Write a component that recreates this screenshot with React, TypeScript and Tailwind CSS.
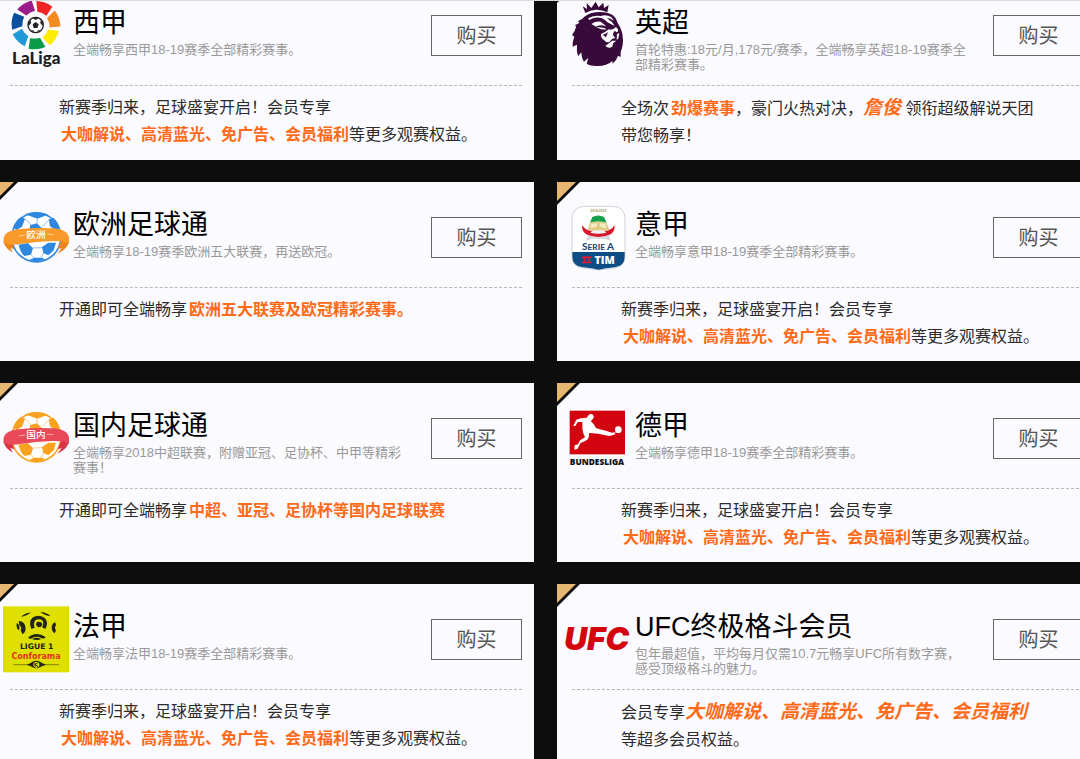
import type { ReactNode } from 'react';

const orange = 'ml-0.5 font-bold text-[#ff6a17]';
const orangeItalic = 'text-[19px] font-bold italic text-[#ff6a17]';

function LaLigaLogo() {
  const colors = ['#ee2523', '#f58a1f', '#ffed00', '#0a9b48', '#1f9ad6', '#0b4f9e', '#9b1b8a'];
  return (
    <svg viewBox="9 6 198 210" className="h-full w-full" role="img" aria-label="LaLiga">
      {colors.map((color, i) => (
        <path key={color} d="M109 6 Q136 7 157 23 L139 50 Q127 40 112 38 Z" fill={color} transform={`rotate(${(i * 360) / 7} 107 78)`} />
      ))}
      <circle cx="107" cy="78" r="23" fill="#fff" stroke="#222" strokeWidth="4" />
      <path d="M107 69 L116 76 L112 87 H101 L98 76 Z" fill="#222" />
      <path d="M98 58 Q107 54 116 58 L107 63 Z M86 71 L92 63 L93 73 L86 81 Z M128 71 L122 63 L121 73 L128 81 Z M92 94 L100 94 L103 100 Z M122 94 L114 94 L111 100 Z" fill="#222" />
      <text x="109" y="196" textAnchor="middle" fontSize="51" className="fill-[#1d1d1d] font-['Lato',sans-serif] font-black">LaLiga</text>
    </svg>
  );
}

function PremierLeagueLogo() {
  return (
    <svg viewBox="27 6 198 210" className="h-full w-full" role="img" aria-label="Premier League">
      <g fill="#380a3c">
        <path d="M88 42 L80 22 L93 30 L92 12 L106 27 L119 8 L128 25 L142 11 L144 27 L158 18 L154 40 Q136 31 120 32 Q102 33 88 42 Z" />
        <path d="M78 60 Q93 43 119 40 Q149 36 170 48 Q181 56 184 70 L193 86 Q201 101 201 122 Q201 144 194 158 L194 174 L186 170 Q181 186 170 194 L169 186 Q151 203 119 201 Q104 201 92 195 L97 176 L84 188 Q77 179 76 160 L66 172 Q61 155 63 137 L50 143 Q49 127 55 113 L48 108 Q57 98 60 84 L58 78 L70 72 L66 66 Z" />
      </g>
      <g fill="#fbfafe">
        <path d="M96 58 Q113 47 135 51 Q150 46 166 54 L174 65 Q163 57 152 57 L168 69 L176 81 L164 75 Q152 70 146 62 Q131 52 113 57 L100 63 Z" />
        <path d="M106 75 Q119 66 134 68 L151 82 L138 79 Q128 79 119 83 L146 87 L151 91 Q137 93 128 88 Q116 80 106 75 Z" />
        <path d="M158 91 Q168 95 180 84 L186 91 Q188 99 181 100 L177 95 Q170 101 171 109 L178 117 L169 119 L160 129 Q150 132 144 123 Q134 119 135 105 L147 99 Z" />
        <path d="M153 137 L169 125 L181 125 L172 132 L169 143 Q157 151 148 140 Z" />
        <path d="M183 105 L190 102 L187 119 L182 122 Z" />
      </g>
      <path d="M140 107 Q149 106 156 99 L150 115 Z" fill="#380a3c" />
    </svg>
  );
}

function BallLogo({ label, viewBox, ball, seam, ribbon, fold }: { label: string; viewBox: string; ball: string; seam: string; ribbon: string; fold: string }) {
  return (
    <svg viewBox={viewBox} className="h-full w-full" role="img" aria-label={label}>
      <circle cx="109" cy="172" r="76" fill={ball} />
      <circle cx="109" cy="172" r="71" fill="#fff" />
      <g fill={ball}>
        <path d="M74 103 Q108 90 144 103 L132 109 L112 116 L88 107 Z" />
        <path d="M39 143 Q47 120 64 110 L75 116 L66 140 L50 150 Z" />
        <path d="M146 118 L160 113 Q175 126 179 145 L166 151 L150 139 Z" />
        <path d="M91 135 L111 130 L124 143 L119 156 H87 Z" />
        <path d="M56 194 L83 189 L99 204 L93 224 L73 228 Q60 216 56 194 Z" />
        <path d="M126 201 L145 188 L168 188 L161 211 L145 226 L130 219 Z" />
        <path d="M88 239 L103 233 H124 L137 238 Q110 249 88 239 Z" />
      </g>
      <path d="M75 117 L93 134 M112 115 L111 130 M147 119 L124 143 M99 204 L126 203 M93 224 L103 234 M130 219 L123 234 M56 195 L43 187" stroke={seam} strokeWidth="3" fill="none" />
      <path d="M12 171 L11 187 Q15 205 38 218 L31 204 L42 208 L36 182 Z M207 169 L207 186 Q200 209 172 221 L185 205 L173 207 L184 181 Z" fill={fold} />
      <path d="M11 175 Q14 151 62 147 Q108 142 157 145 Q205 147 207 176 L207 192 Q197 182 158 183 Q109 184 61 192 Q28 197 11 189 Z" fill={ribbon} />
      <path d="M56 168 L75 165 M141 162 L160 164" stroke="#fff" strokeWidth="2" opacity="0.8" />
      <text x="108" y="173" textAnchor="middle" fontSize="29" fill="#fff" className="font-['Noto_Sans_CJK_SC',sans-serif] font-medium">{label}</text>
    </svg>
  );
}

function SerieALogo() {
  return (
    <svg viewBox="27 69 198 210" className="h-full w-full" role="img" aria-label="Serie A TIM">
      <path d="M48 118 Q48 79 88 79 H168 Q207 79 207 118 V230 Q207 260 176 264 Q150 266 128 270 Q106 266 80 264 Q48 260 48 230 Z" fill="#fff" stroke="#cfd2d8" strokeWidth="3" />
      <path d="M49 216 H206 V230 Q206 258 176 262 Q148 265 128 269 Q108 265 80 262 Q49 258 49 230 Z" fill="#0b4e86" />
      <text x="127" y="97" textAnchor="middle" fontSize="10" fill="#a5935a" className="font-['Liberation_Sans',sans-serif] font-bold">2018-2019</text>
      <path d="M102 128 L109 111 Q127 102 144 111 L152 128 Q127 121 102 128 Z" fill="#16a04b" />
      <path d="M102 129 Q127 121 152 129 L160 149 Q127 160 95 149 Z" fill="#dfca86" />
      <path d="M106 132 L123 129 V140 L103 145 Z M131 129 L149 132 L151 145 L131 140 Z" fill="#f5eac2" />
      <path d="M79 135 Q87 155 127 156 Q168 155 175 135 Q181 169 127 171 Q74 169 79 135 Z" fill="#d7192d" />
      <path d="M96 166 Q127 176 158 166 L166 183 L145 176 H110 L88 183 Z" fill="#d5d9df" />
      <path d="M103 158 L113 151 H142 L151 158 Q127 164 103 158 Z" fill="#edf0f3" />
      <text x="126" y="210" textAnchor="middle" fontSize="30" fill="#173b70" className="font-['Lato',sans-serif] font-bold">S<tspan fontSize="25">ERIE</tspan> A</text>
      <path d="M78 229 H107 V235 H78 Z M83 229 H88 V250 H83 Z M97 229 H102 V250 H97 Z M78 245 H107 V250 H78 Z" fill="#d71c36" />
      <text x="146" y="251" textAnchor="middle" fontSize="32" fill="#fff" className="font-['Open_Sans',sans-serif] font-extrabold">TIM</text>
    </svg>
  );
}

function BundesligaLogo() {
  return (
    <svg viewBox="27 72 198 210" className="h-full w-full" role="img" aria-label="Bundesliga">
      <rect x="41" y="92" width="166" height="131" fill="#d3030f" />
      <path d="M98 105 Q104 99 111 104 Q116 111 111 117 Q106 120 105 124 Q114 132 120 144 Q134 150 144 151 L168 158 L177 157 Q181 160 174 164 L160 168 L126 161 Q108 160 99 159 Q101 171 93 180 L73 190 L65 206 L55 209 L56 196 L66 193 L72 181 L87 172 Q80 160 79 145 L79 126 L66 126 L57 139 L52 137 L61 119 Q73 113 92 113 Z" fill="#fff" />
      <circle cx="187" cy="149" r="10" fill="#fff" />
      <text x="123" y="255" textAnchor="middle" fontSize="25" fill="#111" className="font-['Open_Sans',sans-serif] font-extrabold">BUNDESLIGA</text>
    </svg>
  );
}

function Ligue1Logo() {
  return (
    <svg viewBox="9 75 198 210" className="h-full w-full" role="img" aria-label="Ligue 1 Conforama">
      <rect x="9" y="79" width="198" height="198" fill="#dfe001" />
      <g fill="#222417">
        <path d="M94 147 Q84 125 99 112 Q116 102 134 114 Q147 126 136 147 L126 142 Q133 131 127 121 Q117 114 106 121 Q99 131 104 143 Z" />
        <path d="M116 125 Q127 125 127 134 Q124 142 116 142 Q108 140 108 132 Q109 125 116 125 Z" />
        <path d="M64 109 Q76 99 94 97 Q84 106 66 110 Z M121 96 Q140 97 151 108 Q137 108 121 96 Z" />
        <path d="M84 173 Q108 151 138 172 L129 176 Q108 164 92 177 Z M96 177 Q109 169 124 177 Q111 183 96 177 Z" />
        <path d="M56 123 Q76 123 77 146 Q75 160 67 162 L62 151 Q67 142 58 135 Z M50 129 Q62 133 57 151 Q48 146 50 129 Z" />
        <path d="M166 127 Q155 131 155 144 Q157 157 164 160 L168 151 Q162 143 168 136 Z" />
      </g>
      <text x="110" y="207" textAnchor="middle" fontSize="23" fill="#222417" className="font-['DejaVu_Sans',sans-serif] font-bold">LIGUE 1</text>
      <text x="108" y="236" textAnchor="middle" fontSize="24" fill="#e0341b" className="font-['DejaVu_Sans',sans-serif] font-bold">Conforama</text>
      <path d="M40 254 H88 M130 254 H177" stroke="#55570c" strokeWidth="2" />
      <path d="M80 254 Q92 250 98 245 Q109 240 120 245 Q126 250 138 254 Q126 258 120 262 Q109 268 98 262 Q92 258 80 254 Z" fill="#222417" />
      <circle cx="109" cy="254" r="9" fill="#dfe001" />
      <path d="M105 248 V260 M113 248 L106 254 L114 260" stroke="#222417" strokeWidth="3" fill="none" />
    </svg>
  );
}

function UfcLogo() {
  return (
    <svg viewBox="27 75 198 210" className="h-full w-full overflow-visible" role="img" aria-label="UFC">
      <text x="122" y="209" textAnchor="middle" fontSize="95" fill="#d3050f" className="font-['Inter',sans-serif] font-black italic">UFC</text>
    </svg>
  );
}

interface Pass {
  title: string;
  desc: string;
  logo: ReactNode;
  detail: ReactNode;
}

const benefits = (
  <>
    新赛季归来，足球盛宴开启！会员专享
    <br />
    <b className={orange}>大咖解说、高清蓝光、免广告、会员福利</b>等更多观赛权益。
  </>
);

const passes: Pass[] = [
  { title: '西甲', desc: '全端畅享西甲18-19赛季全部精彩赛事。', logo: <LaLigaLogo />, detail: benefits },
  {
    title: '英超',
    desc: '首轮特惠:18元/月,178元/赛季，全端畅享英超18-19赛季全部精彩赛事。',
    logo: <PremierLeagueLogo />,
    detail: (
      <>
        全场次<b className={orange}>劲爆赛事</b>，豪门火热对决，<b className={orangeItalic}>詹俊</b> 领衔超级解说天团
        <br />
        带您畅享！
      </>
    ),
  },
  {
    title: '欧洲足球通',
    desc: '全端畅享18-19赛季欧洲五大联赛，再送欧冠。',
    logo: <BallLogo label="欧洲" viewBox="9 69 198 210" ball="#2f88e0" seam="#8fc0ee" ribbon="#f99b2a" fold="#ee8419" />,
    detail: <>开通即可全端畅享<b className={orange}>欧洲五大联赛及欧冠精彩赛事。</b></>,
  },
  { title: '意甲', desc: '全端畅享意甲18-19赛季全部精彩赛事。', logo: <SerieALogo />, detail: benefits },
  {
    title: '国内足球通',
    desc: '全端畅享2018中超联赛，附赠亚冠、足协杯、中甲等精彩赛事！',
    logo: <BallLogo label="国内" viewBox="9 72 198 210" ball="#f9a21f" seam="#fbcb84" ribbon="#e84a59" fold="#d93347" />,
    detail: <>开通即可全端畅享<b className={orange}>中超、亚冠、足协杯等国内足球联赛</b></>,
  },
  { title: '德甲', desc: '全端畅享德甲18-19赛季全部精彩赛事。', logo: <BundesligaLogo />, detail: benefits },
  { title: '法甲', desc: '全端畅享法甲18-19赛季全部精彩赛事。', logo: <Ligue1Logo />, detail: benefits },
  {
    title: 'UFC终极格斗会员',
    desc: '包年最超值，平均每月仅需10.7元畅享UFC所有数字赛，感受顶级格斗的魅力。',
    logo: <UfcLogo />,
    detail: (
      <>
        会员专享<b className={orangeItalic}>大咖解说、高清蓝光、免广告、会员福利</b>
        <br />
        等超多会员权益。
      </>
    ),
  },
];

function PassCard({ title, desc, logo, detail }: Pass) {
  return (
    <article className="relative min-h-[179px] bg-[#fbfafe]">
      <svg viewBox="0 0 23 23" className="absolute left-0 top-0 size-[23px]" aria-hidden="true">
        <path d="M0 0 H23 L0 23 Z" fill="#0d0d0d" />
        <path d="M0 0 H19 L0 19 Z" fill="#e6b770" />
      </svg>
      <div className="flex h-[105px] items-start pl-2 pr-3">
        <div className="mt-[21px] h-[70px] w-[66px] shrink-0">{logo}</div>
        <div className="ml-1 mr-6 min-w-0 flex-1 pt-[25px]">
          <h2 className="text-[27px] leading-[37px] text-black">{title}</h2>
          <p className="text-[13px] leading-[15px] text-[#999]">{desc}</p>
        </div>
        <button type="button" aria-label={`购买 ${title}`} className="mt-[35px] h-[41px] w-[91px] shrink-0 border border-[#666] text-[20px] text-[#555]">
          购买
        </button>
      </div>
      <div className="ml-[15px] mr-3 border-t border-dashed border-[#b8b8b8]" />
      <p className="whitespace-nowrap pb-[11px] pl-16 pt-2 text-[16px] leading-[27px] text-[#2b2b2b]">{detail}</p>
    </article>
  );
}

export default function App() {
  return (
    <main className="h-screen overflow-hidden border-t border-[#dcdcdc] bg-[#0d0d0d] font-['Liberation_Sans','Noto_Sans_CJK_SC',sans-serif]" lang="zh-CN">
      <div className="-ml-[5px] -mr-4 -mt-[21px] grid grid-cols-2 gap-x-[23px] gap-y-[22px]">
        {passes.map((pass) => (
          <PassCard key={pass.title} {...pass} />
        ))}
      </div>
    </main>
  );
}
